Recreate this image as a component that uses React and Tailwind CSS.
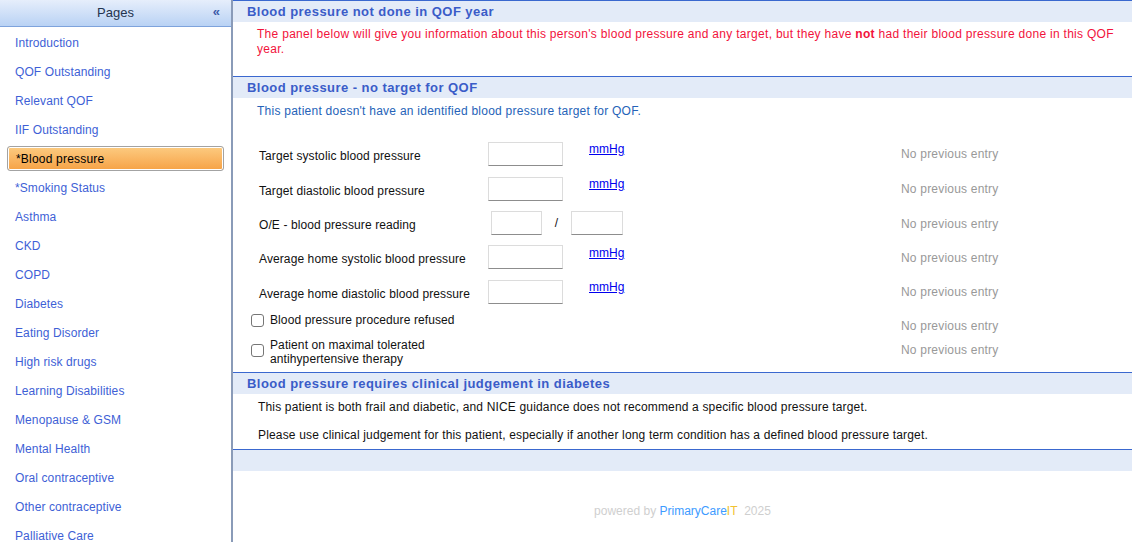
import React from "react";

const pages = [
  "Introduction",
  "QOF Outstanding",
  "Relevant QOF",
  "IIF Outstanding",
  "*Blood pressure",
  "*Smoking Status",
  "Asthma",
  "CKD",
  "COPD",
  "Diabetes",
  "Eating Disorder",
  "High risk drugs",
  "Learning Disabilities",
  "Menopause & GSM",
  "Mental Health",
  "Oral contraceptive",
  "Other contraceptive",
  "Palliative Care",
];

const rows = [
  { label: "Target systolic blood pressure", h: "h-[35px]", unit: true },
  { label: "Target diastolic blood pressure", h: "h-[35px]", unit: true },
  { label: "O/E - blood pressure reading", h: "h-[34px]", split: true },
  { label: "Average home systolic blood pressure", h: "h-[34px]", unit: true },
  { label: "Average home diastolic blood pressure", h: "h-[35px]", unit: true },
];

function Sidebar() {
  return (
    <div className="w-[233px] shrink-0 border-r-2 border-[#8a9bb8] bg-white">
      <div className="h-[27px] flex items-center justify-center relative bg-gradient-to-b from-[#e6eefb] to-[#b9d2f4] border-b border-[#7ea3dc]">
        <span className="text-[13px] text-[#23344f]">Pages</span>
        <span className="absolute right-[11px] top-[5px] text-[13px] leading-[13px] font-bold text-[#3b5aa8]">«</span>
      </div>
      <div className="pt-[1px]">
        {pages.map((p) =>
          p === "*Blood pressure" ? (
            <div key={p} className="h-[29px] flex items-center">
              <div className="mx-[7px] w-[217px] h-[25px] flex items-center pl-[8px] rounded-[3px] border border-[#a3a3a3] shadow-[inset_0_0_0_1px_#fff] bg-gradient-to-b from-[#fccb80] to-[#f6a244] text-[12px] tracking-[0.2px] text-black">
                {p}
              </div>
            </div>
          ) : (
            <div key={p} className="h-[29px] flex items-center pl-[15px] text-[12px] tracking-[0.1px] text-[#3e5fd6]">
              {p}
            </div>
          )
        )}
      </div>
    </div>
  );
}

function Header({ children }) {
  return (
    <div className="h-[22px] flex items-center pl-[14px] bg-[#e3ebf8] border-t border-[#3a68cf] text-[13px] font-bold tracking-[0.45px] text-[#3a5cc8]">
      {children}
    </div>
  );
}

function Box({ w = "w-[75px]" }) {
  return <input className={`${w} h-[24px] border border-[#dcdcdc] border-b-[#8d8d8d] bg-white outline-none`} />;
}

function Check() {
  return <input type="checkbox" className="appearance-none w-[13px] h-[13px] border border-[#767676] rounded-[3px] bg-white shrink-0" />;
}

function Prev({ className = "" }) {
  return <div className={`absolute left-[668px] text-[12px] tracking-[0.2px] text-[#999] ${className}`}>No previous entry</div>;
}

export default function App() {
  return (
    <div className="h-screen overflow-hidden flex bg-white font-['Liberation_Sans',Arial,sans-serif]">
      <Sidebar />
      <div className="flex-1 flex flex-col">
        <Header>Blood pressure not done in QOF year</Header>
        <div className="h-[54px] pl-[24px] pr-[12px] pt-[5px] text-[12px] leading-[15px] tracking-[0.29px] text-[#f2133c]">
          The panel below will give you information about this person's blood pressure and any target, but they have{" "}
          <b>not</b> had their blood pressure done in this QOF year.
        </div>
        <Header>Blood pressure - no target for QOF</Header>
        <div className="h-[38px] pl-[24px] pt-[4px] text-[12px] tracking-[0.25px] text-[#2563b8]">
          This patient doesn't have an identified blood pressure target for QOF.
        </div>
        <div className="flex flex-col">
          {rows.map((r) => (
            <div key={r.label} className={`${r.h} relative flex items-center text-[12px] text-[#111]`}>
              <div className="w-[255px] pl-[26px] pt-[4px] tracking-[0.1px]">{r.label}</div>
              {r.split ? (
                <div className="flex items-center">
                  <div className="ml-[3px]"><Box w="w-[51px]" /></div>
                  <span className="w-[29px] text-center">/</span>
                  <Box w="w-[52px]" />
                </div>
              ) : (
                <>
                  <Box />
                  <a href="#" className="self-start mt-[4px] ml-[26px] text-[#0000ee] underline">mmHg</a>
                </>
              )}
              <Prev className="top-[9px]" />
            </div>
          ))}
          <div className="h-[22px] relative flex items-center pl-[18px] gap-[6px] text-[12px] tracking-[0.1px] text-[#111]">
            <Check />
            <span>Blood pressure procedure refused</span>
            <Prev className="top-[8px]" />
          </div>
          <div className="h-[39px] relative flex items-center pl-[18px] gap-[6px] text-[12px] leading-[14px] tracking-[0.1px] text-[#111]">
            <Check />
            <span className="mt-[3px]">
              Patient on maximal tolerated
              <br />
              antihypertensive therapy
            </span>
            <Prev className="top-[12px]" />
          </div>
        </div>
        <div className="mt-[2px]">
          <Header>Blood pressure requires clinical judgement in diabetes</Header>
        </div>
        <div className="h-[55px] pl-[25px] text-[12px] tracking-[0.16px] text-[#111]">
          <div className="mt-[4px]">This patient is both frail and diabetic, and NICE guidance does not recommend a specific blood pressure target.</div>
          <div className="mt-[10px]">Please use clinical judgement for this patient, especially if another long term condition has a defined blood pressure target.</div>
        </div>
        <div className="h-[22px] bg-[#e3ebf8] border-t border-[#3a68cf]" />
        <div className="pt-[31px] text-center text-[12px] text-[#cfcfcf]">
          powered by <span className="text-[#3d9bff]">PrimaryCare</span>
          <span className="text-[#f1c232]">IT</span>&nbsp; 2025
        </div>
      </div>
    </div>
  );
}
